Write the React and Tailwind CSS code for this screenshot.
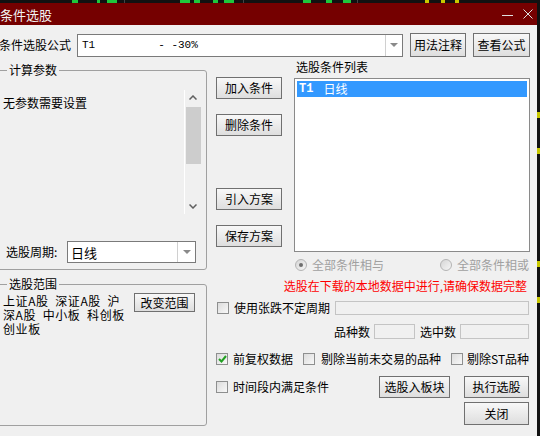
import React from "react";

function Btn({ children, className = "" }) {
  return (
    <div
      className={`flex items-center justify-center border border-[#707070] bg-linear-to-b from-[#f8f8f8] to-[#dedede] text-[12px] leading-none text-black ${className}`}
    >
      {children}
    </div>
  );
}

function Check({ checked }) {
  return (
    <div className="flex h-[12px] w-[12px] shrink-0 items-center justify-center border border-[#8e8f8f] bg-linear-to-br from-[#dcdcdc] to-[#f8f8f8]">
      {checked && (
        <svg width="9" height="8" viewBox="0 0 9 8">
          <path d="M1 4 L3.5 6.5 L8 1" stroke="#22a022" strokeWidth="2" fill="none" />
        </svg>
      )}
    </div>
  );
}

function Radio({ on }) {
  return (
    <div className="flex h-[12px] w-[12px] shrink-0 items-center justify-center rounded-full border border-[#b4b4b4] bg-linear-to-br from-[#d6d6d6] to-[#f6f6f6]">
      {on && <div className="h-[4px] w-[4px] rounded-full bg-[#6e6e6e]" />}
    </div>
  );
}

function DropArrow() {
  return (
    <svg width="8" height="4" viewBox="0 0 8 4">
      <path d="M0 0 L8 0 L4 4 Z" fill="#8a8a8a" />
    </svg>
  );
}

export default function App() {
  return (
    <div className="h-[436px] w-[540px] overflow-hidden bg-[#111111] font-['Noto_Sans_CJK_SC',sans-serif] text-[12px] text-black">
      {/* chart strip behind the dialog */}
      <div className="relative h-[3px]">
        <div className="absolute left-[72px] top-0 h-[3px] w-[6px] bg-[#1ec83c]" />
        <div className="absolute left-[97px] top-0 h-[3px] w-[3px] bg-[#1ec83c]" />
        <div className="absolute left-[107px] top-0 h-[3px] w-[10px] bg-[#1ec83c]" />
        <div className="absolute left-[124px] top-0 h-[3px] w-[1px] bg-[#444]" />
        <div className="absolute left-[180px] top-0 h-[3px] w-[10px] bg-[#1ec83c]" />
        <div className="absolute left-[194px] top-0 h-[3px] w-[6px] bg-[#1ec83c]" />
        <div className="absolute left-[213px] top-0 h-[3px] w-[5px] bg-[#1ec83c]" />
        <div className="absolute left-[224px] top-0 h-[3px] w-[10px] bg-[#1ec83c]" />
        <div className="absolute left-[243px] top-0 h-[3px] w-[1px] bg-[#444]" />
        <div className="absolute left-[303px] top-0 h-[3px] w-[8px] bg-[#1ec83c]" />
        <div className="absolute left-[326px] top-0 h-[3px] w-[6px] bg-[#1ec83c]" />
        <div className="absolute left-[343px] top-0 h-[3px] w-[8px] bg-[#1ec83c]" />
        <div className="absolute left-[357px] top-0 h-[3px] w-[1px] bg-[#444]" />
        <div className="absolute left-[425px] top-0 h-[3px] w-[4px] bg-[#c8c800]" />
        <div className="absolute left-[441px] top-0 h-[3px] w-[4px] bg-[#c8c800]" />
        <div className="absolute left-[455px] top-0 h-[3px] w-[4px] bg-[#c8c800]" />
      </div>

      <div className="flex h-[433px]">
        {/* dialog */}
        <div className="flex w-[537px] flex-col">
          {/* title bar */}
          <div className="flex h-[22px] items-center bg-[#750000] text-[#f2f2f2]">
            <span className="text-[13px] leading-none">条件选股</span>
            <div className="ml-auto flex items-center gap-[10px] pr-[4px]">
              <svg width="11" height="11" viewBox="0 0 11 11">
                <path d="M0 6.5 H11" stroke="#e0e0e0" strokeWidth="1" />
              </svg>
              <svg width="10" height="10" viewBox="0 0 10 10">
                <path d="M0.5 0.5 L9.5 9.5 M9.5 0.5 L0.5 9.5" stroke="#e0e0e0" strokeWidth="1" />
              </svg>
            </div>
          </div>

          {/* body */}
          <div className="flex-1 bg-[#f0f0f0]">
            {/* formula row */}
            <div className="mt-[8px] flex h-[24px] items-center">
              <span className="-ml-[1px] w-[78px] leading-none">条件选股公式</span>
              <div className="flex h-[23px] w-[326px] border border-[#7a7a7a] bg-white">
                <div className="flex flex-1 items-center pl-[4px] font-['Liberation_Mono',monospace] text-[11px] whitespace-pre">
                  <span>T1</span>
                  <span className="ml-[63px]">- -30%</span>
                </div>
                <div className="flex w-[17px] items-center justify-center border-l border-[#d0d0d0]">
                  <DropArrow />
                </div>
              </div>
              <Btn className="ml-[7px] h-[24px] w-[56px]">用法注释</Btn>
              <Btn className="ml-[7px] h-[24px] w-[57px]">查看公式</Btn>
            </div>

            <div className="flex">
              {/* left column */}
              <div className="-ml-[5px] w-[212px]">
                <div className="relative mt-[13px] h-[200px] rounded-[3px] border border-[#a0a0a0]">
                  <span className="absolute -top-[8px] left-[11px] bg-[#f0f0f0] px-[2px] leading-[14px]">计算参数</span>
                  <div className="mt-[19px] flex h-[124px]">
                    <div className="flex-1 pl-[7px] pt-[6px] leading-[14px]">无参数需要设置</div>
                    <div className="w-[1px] bg-white" />
                    <div className="mr-[5px] flex w-[16px] flex-col items-center">
                      <svg className="mt-[5px]" width="8" height="5" viewBox="0 0 8 5">
                        <path d="M0.5 4.5 L4 1 L7.5 4.5" stroke="#606060" strokeWidth="1.5" fill="none" />
                      </svg>
                      <div className="mt-[7px] h-[57px] w-[15px] bg-[#cdcdcd]" />
                      <svg className="mt-auto mb-[5px]" width="8" height="5" viewBox="0 0 8 5">
                        <path d="M0.5 0.5 L4 4 L7.5 0.5" stroke="#606060" strokeWidth="1.5" fill="none" />
                      </svg>
                    </div>
                  </div>
                  <div className="mt-[27px] flex h-[22px] items-center">
                    <span className="ml-[10px] w-[61px] leading-none">选股周期:</span>
                    <div className="flex h-[22px] w-[129px] border border-[#7a7a7a] bg-white">
                      <div className="flex flex-1 items-center pl-[3px] text-[13px] leading-none">日线</div>
                      <div className="flex w-[18px] items-center justify-center border-l border-[#d0d0d0]">
                        <DropArrow />
                      </div>
                    </div>
                  </div>
                </div>

                <div className="relative mt-[14px] h-[142px] rounded-[3px] border border-[#a0a0a0]">
                  <span className="absolute -top-[8px] left-[11px] bg-[#f0f0f0] px-[2px] leading-[14px]">选股范围</span>
                  <div className="mt-[8px] flex">
                    <div className="mt-[1px] ml-[7px] w-[126px] leading-[14px] tracking-[0.6px] whitespace-pre">
                      <div>上证A股  深证A股  沪</div>
                      <div>深A股  中小板  科创板</div>
                      <div>创业板</div>
                    </div>
                    <Btn className="ml-[5px] h-[19px] w-[61px]">改变范围</Btn>
                  </div>
                </div>
              </div>

              {/* right area */}
              <div className="ml-[9px] w-[314px]">
                <div className="flex">
                  <div className="flex w-[66px] flex-col pt-[20px]">
                    <Btn className="h-[22px]">加入条件</Btn>
                    <Btn className="mt-[15px] h-[22px]">删除条件</Btn>
                    <Btn className="mt-[52px] h-[22px]">引入方案</Btn>
                    <Btn className="mt-[15px] h-[22px]">保存方案</Btn>
                  </div>
                  <div className="ml-[12px] w-[236px]">
                    <div className="mt-[2px] ml-[2px] leading-[16px]">选股条件列表</div>
                    <div className="mt-[3px] h-[174px] border border-[#8a8a8a] bg-white p-[2px]">
                      <div className="flex h-[16px] items-center bg-[#3399ff] text-white">
                        <span className="ml-[2px] font-['Liberation_Mono',monospace] text-[12px] font-bold">T1</span>
                        <span className="ml-[10px] leading-none">日线</span>
                      </div>
                    </div>
                  </div>
                </div>

                <div className="mt-[6px] flex h-[14px] items-center text-[#a0a0a0]">
                  <div className="ml-[79px]">
                    <Radio on />
                  </div>
                  <span className="ml-[5px] leading-none">全部条件相与</span>
                  <div className="ml-[56px]">
                    <Radio />
                  </div>
                  <span className="ml-[5px] leading-none">全部条件相或</span>
                </div>

                <div className="mt-[7px] flex h-[14px] items-center justify-end pr-[3px] leading-none text-[#ff0000]">
                  选股在下载的本地数据中进行,请确保数据完整
                </div>

                <div className="mt-[8px] flex h-[14px] items-center">
                  <div className="ml-[1px]">
                    <Check />
                  </div>
                  <span className="ml-[5px] leading-none">使用张跌不定周期</span>
                  <div className="ml-auto mr-[1px] h-[14px] w-[194px] border border-[#c4c4c4] bg-[#f0f0f0]" />
                </div>

                <div className="mt-[9px] flex h-[15px] items-center justify-end pr-[1px]">
                  <span className="leading-none">品种数</span>
                  <div className="ml-[4px] h-[15px] w-[41px] border border-[#c4c4c4] bg-[#f0f0f0]" />
                  <span className="ml-[5px] leading-none">选中数</span>
                  <div className="ml-[4px] h-[15px] w-[69px] border border-[#c4c4c4] bg-[#f0f0f0]" />
                </div>

                <div className="mt-[13px] flex h-[14px] items-center">
                  <Check checked />
                  <span className="ml-[5px] leading-none">前复权数据</span>
                  <div className="ml-[10px]">
                    <Check />
                  </div>
                  <span className="ml-[6px] leading-none">剔除当前未交易的品种</span>
                  <div className="ml-[10px]">
                    <Check />
                  </div>
                  <span className="ml-[4px] leading-none">剔除ST品种</span>
                </div>

                <div className="mt-[10px] flex h-[22px] items-center">
                  <Check />
                  <span className="ml-[5px] leading-none">时间段内满足条件</span>
                  <Btn className="ml-auto h-[22px] w-[71px]">选股入板块</Btn>
                  <Btn className="ml-[14px] mr-[1px] h-[22px] w-[65px]">执行选股</Btn>
                </div>

                <div className="mt-[4px] flex justify-end">
                  <Btn className="mr-[1px] h-[23px] w-[65px]">关闭</Btn>
                </div>
              </div>
            </div>
          </div>
        </div>

        {/* chart strip at right */}
        <div className="relative w-[3px]">
          <div className="absolute left-0 top-[109px] h-[6px] w-[3px] bg-[#c8c800]" />
          <div className="absolute left-0 top-[145px] h-[6px] w-[3px] bg-[#c8c800]" />
          <div className="absolute left-0 top-[258px] h-[6px] w-[3px] bg-[#c8c800]" />
          <div className="absolute left-0 top-[294px] h-[6px] w-[3px] bg-[#c8c800]" />
        </div>
      </div>
    </div>
  );
}
